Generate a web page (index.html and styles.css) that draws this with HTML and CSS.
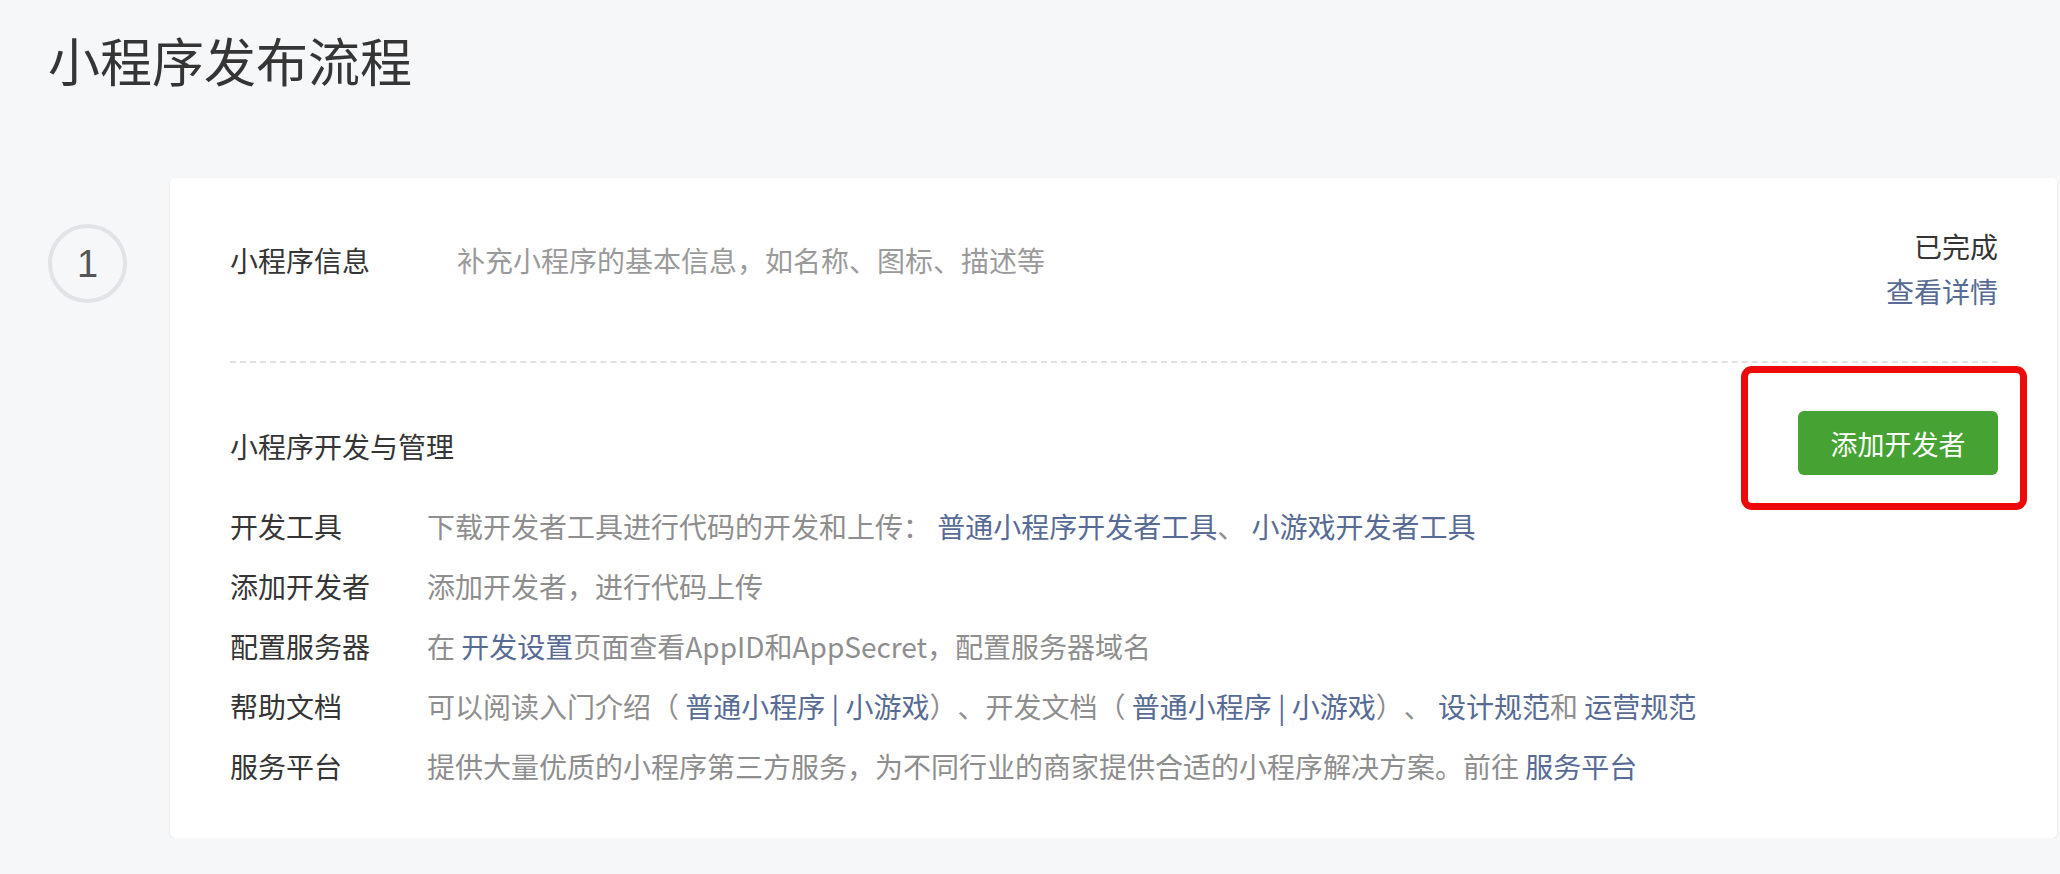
FILE: index.html
```html
<!DOCTYPE html>
<html lang="zh-CN">
<head>
<meta charset="utf-8">
<title>小程序发布流程</title>
<link rel="stylesheet" href="styles.css">
</head>
<body>
<div class="page">
  <h1 class="title">小程序发布流程</h1>
  <div class="step">
    <div class="step-num"><span>1</span></div>
    <div class="card">
      <div class="sec-info">
        <div class="info-name">小程序信息</div>
        <div class="info-desc">补充小程序的基本信息，如名称、图标、描述等</div>
        <div class="info-status">
          <div class="done">已完成</div>
          <a class="link">查看详情</a>
        </div>
      </div>
      <div class="sec-dev">
        <div class="dev-head">
          <div class="dev-title">小程序开发与管理</div>
          <div class="btn-wrap">
            <button class="btn">添加开发者</button>
            <div class="mark"></div>
          </div>
        </div>
        <div class="rows">
          <div class="row"><div class="lbl">开发工具</div><div class="desc">下载开发者工具进行代码的开发和上传： <a class="link">普通小程序开发者工具</a>、 <a class="link">小游戏开发者工具</a></div></div>
          <div class="row"><div class="lbl">添加开发者</div><div class="desc">添加开发者，进行代码上传</div></div>
          <div class="row"><div class="lbl">配置服务器</div><div class="desc">在 <a class="link">开发设置</a>页面查看AppID和AppSecret，配置服务器域名</div></div>
          <div class="row"><div class="lbl">帮助文档</div><div class="desc">可以阅读入门介绍（ <a class="link">普通小程序 | 小游戏</a>）、开发文档（ <a class="link">普通小程序 | 小游戏</a>）、 <a class="link">设计规范</a>和 <a class="link">运营规范</a></div></div>
          <div class="row"><div class="lbl">服务平台</div><div class="desc">提供大量优质的小程序第三方服务，为不同行业的商家提供合适的小程序解决方案。前往 <a class="link">服务平台</a></div></div>
        </div>
      </div>
    </div>
  </div>
</div>
</body>
</html>
```

FILE: styles.css
```css
html, body {
  margin: 0;
  padding: 0;
  background: #f6f7f9;
}
body {
  font-family: "Noto Sans CJK SC", "Noto Sans", sans-serif;
  color: #353535;
  font-size: 28px;
  text-spacing-trim: space-all;
}
.page {
  padding: 0 3px 0 48px;
}
.title {
  margin: 0;
  padding-top: 28px;
  height: 178px;
  box-sizing: border-box;
  font-size: 52px;
  font-weight: 400;
  line-height: 64px;
  color: #353535;
}
.step {
  display: flex;
  align-items: flex-start;
  gap: 43px;
}
.step-num {
  margin-top: 46px;
  width: 79px;
  height: 79px;
  box-sizing: border-box;
  border: 4px solid #e2e3e7;
  border-radius: 50%;
  display: flex;
  align-items: center;
  justify-content: center;
  font-family: "Liberation Sans", "Noto Sans", sans-serif;
  font-size: 38px;
  color: #555;
  flex: none;
}
.step-num span { margin-top: 2px; }
.card {
  flex: 1;
  background: #fff;
  border-radius: 5px;
  box-shadow: 0 1px 3px rgba(0,0,0,0.08);
  padding: 0 59px 40px 60px;
  height: 660px;
  box-sizing: border-box;
}
.sec-info {
  display: flex;
  align-items: flex-start;
  padding-top: 46px;
  padding-bottom: 47px;
  border-bottom: 2px dashed #e1e1e1;
}
.info-name {
  width: 227px;
  line-height: 72px;
}
.info-desc {
  flex: 1;
  line-height: 72px;
  color: #9a9a9a;
}
.info-status {
  text-align: right;
  line-height: 45px;
  display: flex;
  flex-direction: column;
  align-items: flex-end;
}
.link {
  color: #576b95;
  text-decoration: none;
}
.sec-dev {
  padding-top: 48px;
}
.dev-head {
  display: flex;
  justify-content: space-between;
  align-items: center;
  height: 64px;
}
.dev-title {
  line-height: 64px;
  margin-top: 6px;
}
.btn-wrap {
  position: relative;
}
.btn {
  display: block;
  width: 200px;
  height: 64px;
  border: 0;
  border-radius: 6px;
  background: #46a233;
  color: #fff;
  font-family: inherit;
  font-size: 27px;
  padding: 0;
}
.mark {
  position: absolute;
  top: -45px;
  left: -57px;
  right: -29px;
  bottom: -35px;
  border: 7px solid #ee0a0a;
  border-radius: 11px;
}
.rows {
  margin-top: 21px;
}
.row {
  display: flex;
  line-height: 60px;
}
.lbl {
  width: 197px;
  flex: none;
}
.desc {
  color: #8e8e8e;
}
```
